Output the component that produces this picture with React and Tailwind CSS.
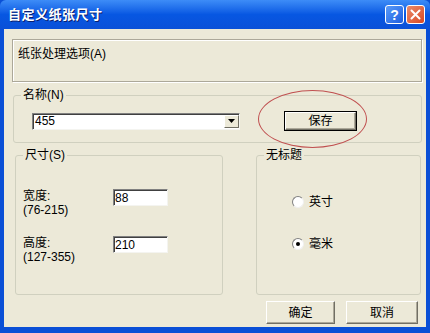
function GroupBox({ label, className, children }) {
  return (
    <fieldset className={"border border-[#d0d0bf] rounded-[3px] " + className}>
      <legend className="ml-[7px] px-[2px] text-[12px] leading-[14px] text-black">{label}</legend>
      {children}
    </fieldset>
  )
}

function Sunken({ className, children }) {
  return (
    <div className={"bg-white border border-t-[#808080] border-l-[#808080] border-b-[#f4f4f0] border-r-[#f4f4f0] shadow-[inset_1px_1px_0_#404040] " + className}>
      {children}
    </div>
  )
}

function XpButton({ label, className }) {
  return (
    <div className={"flex items-center justify-center bg-[#ece9d8] border border-t-white border-l-white border-b-[#716f64] border-r-[#716f64] shadow-[inset_-1px_-1px_0_#aca899] text-[12px] " + className}>
      {label}
    </div>
  )
}

function Radio({ checked, label }) {
  return (
    <div className="flex items-center gap-[5px] h-[14px]">
      <div className="w-[12px] h-[12px] rounded-full bg-white border border-t-[#808080] border-l-[#808080] border-b-[#f0f0f0] border-r-[#f0f0f0] flex items-center justify-center">
        {checked && <div className="w-[4px] h-[4px] rounded-full bg-black" />}
      </div>
      <span className="text-[12px] leading-[14px]">{label}</span>
    </div>
  )
}

export default function App() {
  return (
    <div
      className="w-[430px] h-[333px] bg-[#0a4fd6] flex flex-col overflow-hidden"
      style={{ fontFamily: '"Liberation Sans", "Noto Sans CJK SC", sans-serif' }}
    >
      <div className="h-[29px] shrink-0 flex items-center pl-[8px] pr-[5px] bg-gradient-to-b from-[#3d8cf7] via-[#0757e2] to-[#0a50d8] rounded-t-[6px]">
        <span className="text-white font-bold text-[13px] tracking-[0.5px] [text-shadow:1px_1px_0_#0a1e6e]">自定义纸张尺寸</span>
        <div className="ml-auto flex gap-[2px]">
          <div className="w-[19px] h-[19px] rounded-[3px] border border-white bg-gradient-to-br from-[#5b9bf8] to-[#1c5ce0] flex items-center justify-center text-white font-bold text-[14px] leading-none">?</div>
          <div className="w-[19px] h-[19px] rounded-[3px] border border-white bg-gradient-to-br from-[#e98a6a] to-[#d8461f] flex items-center justify-center">
            <svg width="11" height="11" viewBox="0 0 11 11">
              <path d="M1.5 1.5 L9.5 9.5 M9.5 1.5 L1.5 9.5" stroke="white" strokeWidth="2" strokeLinecap="round" />
            </svg>
          </div>
        </div>
      </div>

      <div className="flex-1 mx-[4px] mb-[6px] bg-[#ece9d8] relative flex flex-col text-black">
        <div className="ml-[8px] mr-[4px] mt-[10px] h-[43px] border border-[#aca899] shadow-[inset_1px_1px_0_white,1px_1px_0_white] pl-[5px] pt-[7px] text-[12px] leading-[14px]">
          纸张处理选项(A)
        </div>

        <GroupBox label="名称(N)" className="ml-[9px] mr-[4px] mt-[6px] h-[55px]">
          <div className="flex items-center pl-[18px] pt-[9px]">
            <Sunken className="w-[208px] h-[17px] flex items-center">
              <span className="pl-[2px] text-[12px] leading-none flex-1">455</span>
              <div className="w-[15px] h-[13px] bg-[#ece9d8] border border-t-white border-l-white border-b-[#716f64] border-r-[#716f64] flex items-center justify-center">
                <svg width="7" height="4" viewBox="0 0 7 4"><path d="M0 0 H7 L3.5 4 Z" fill="black" /></svg>
              </div>
            </Sunken>
            <div className="ml-[44px] w-[73px] h-[20px] border border-black">
              <XpButton label="保存" className="w-full h-full" />
            </div>
          </div>
        </GroupBox>

        <div className="absolute left-[254px] top-[61px] w-[109px] h-[58px] rounded-[50%] border border-[#c05050]" />

        <div className="flex mt-[5px]">
          <GroupBox label="尺寸(S)" className="ml-[11px] w-[208px] h-[147px]">
            <div className="flex flex-col gap-[19px] pl-[7px] pt-[27px]">
              <div className="flex">
                <div className="w-[90px] text-[12px] leading-[14px]">
                  <div>宽度:</div>
                  <div>(76-215)</div>
                </div>
                <Sunken className="w-[55px] h-[17px] flex items-center pl-[1px] text-[12px]">88</Sunken>
              </div>
              <div className="flex">
                <div className="w-[90px] text-[12px] leading-[14px]">
                  <div>高度:</div>
                  <div>(127-355)</div>
                </div>
                <Sunken className="w-[55px] h-[17px] flex items-center pl-[1px] text-[12px]">210</Sunken>
              </div>
            </div>
          </GroupBox>

          <GroupBox label="无标题" className="ml-[33px] w-[165px] h-[147px]">
            <div className="flex flex-col gap-[28px] pl-[35px] pt-[33px]">
              <Radio label="英寸" />
              <Radio checked label="毫米" />
            </div>
          </GroupBox>
        </div>

        <div className="flex justify-end gap-[11px] mr-[8px] mt-[6px]">
          <XpButton label="确定" className="w-[69px] h-[23px]" />
          <XpButton label="取消" className="w-[72px] h-[23px]" />
        </div>
      </div>
    </div>
  )
}
